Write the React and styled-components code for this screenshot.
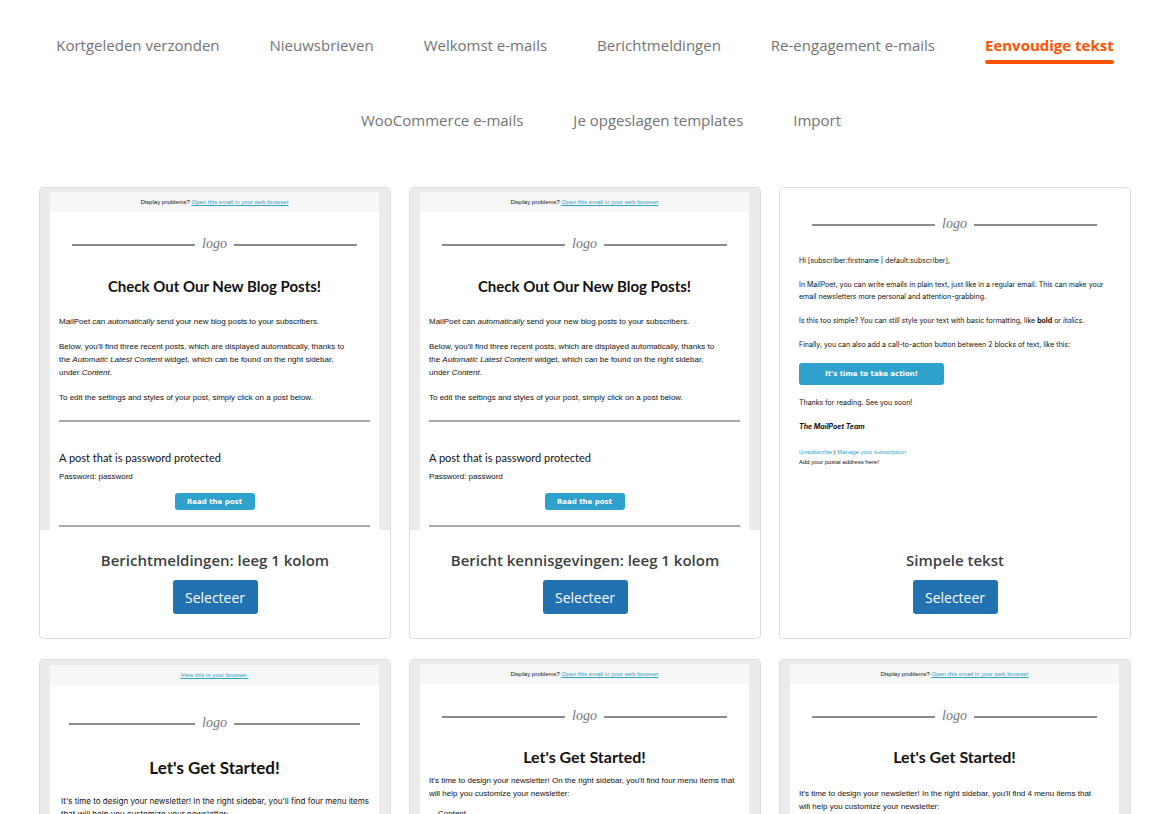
import React from 'react';
import styled, { createGlobalStyle } from 'styled-components';

const categoryRows = [
  [
    'Kortgeleden verzonden',
    'Nieuwsbrieven',
    'Welkomst e-mails',
    'Berichtmeldingen',
    'Re-engagement e-mails',
    'Eenvoudige tekst',
  ],
  ['WooCommerce e-mails', 'Je opgeslagen templates', 'Import'],
];

const Logo = ({ top, wide }) => (
  <LogoRow $top={top} $wide={wide}>
    <LogoLine />
    <LogoText>logo</LogoText>
    <LogoLine />
  </LogoRow>
);

const BrowserBar = () => (
  <TopBar>
    Display problems? <TopLink href="#browser">Open this email in your web browser</TopLink>
  </TopBar>
);

const BlogPosts = () => (
  <Preview>
    <Paper>
      <BrowserBar />
      <Logo top={22} />
      <Heading $top={22} $size={15}>Check Out Our New Blog Posts!</Heading>
      <Text $top={19}>
        MailPoet can <em>automatically</em> send your new blog posts to your subscribers.
      </Text>
      <Text $top={12}>
        Below, you'll find three recent posts, which are displayed automatically, thanks to<br />
        the <em>Automatic Latest Content</em> widget, which can be found on the right sidebar,<br />
        under <em>Content</em>.
      </Text>
      <Text $top={12}>To edit the settings and styles of your post, simply click on a post below.</Text>
      <Divider $top={16} />
      <PostTitle>A post that is password protected</PostTitle>
      <Text $top={4}>Password: password</Text>
      <ReadButton type="button">Read the post</ReadButton>
      <Divider $top={15} />
    </Paper>
  </Preview>
);

const SimpleText = () => (
  <Preview $plain>
    <Paper>
      <Logo top={22} />
      <Letter>
        <p>Hi [subscriber:firstname | default:subscriber],</p>
        <p>
          In MailPoet, you can write emails in plain text, just like in a regular email. This can make your<br />
          email newsletters more personal and attention-grabbing.
        </p>
        <p>
          Is this too simple? You can still style your text with basic formatting, like <b>bold</b> or <em>italics</em>.
        </p>
        <p>Finally, you can also add a call-to-action button between 2 blocks of text, like this:</p>
        <ActionButton type="button">It's time to take action!</ActionButton>
        <p>Thanks for reading. See you soon!</p>
        <p><b><em>The MailPoet Team</em></b></p>
      </Letter>
      <Footer>
        <a href="#unsubscribe">Unsubscribe</a> | <a href="#manage">Manage your subscription</a><br />
        Add your postal address here!
      </Footer>
    </Paper>
  </Preview>
);

const GetStartedLarge = () => (
  <Preview>
    <Paper $top={5}>
      <TopBar><TopLink href="#browser">View this in your browser.</TopLink></TopBar>
      <Logo top={28} wide />
      <Heading $top={25} $size={17}>Let's Get Started!</Heading>
      <Text $top={17} $large>
        It's time to design your newsletter! In the right sidebar, you'll find four menu items<br />
        that will help you customize your newsletter:
      </Text>
    </Paper>
  </Preview>
);

const GetStartedList = () => (
  <Preview>
    <Paper>
      <BrowserBar />
      <Logo top={22} />
      <Heading $top={21}>Let's Get Started!</Heading>
      <Text $top={7}>
        It's time to design your newsletter! On the right sidebar, you'll find four menu items that<br />
        will help you customize your newsletter:
      </Text>
      <List>
        <li>Content</li>
      </List>
    </Paper>
  </Preview>
);

const GetStarted = () => (
  <Preview>
    <Paper>
      <BrowserBar />
      <Logo top={22} />
      <Heading $top={21}>Let's Get Started!</Heading>
      <Text $top={20}>
        It's time to design your newsletter! In the right sidebar, you'll find 4 menu items that<br />
        will help you customize your newsletter:
      </Text>
    </Paper>
  </Preview>
);

const templates = [
  { id: 1, name: 'Berichtmeldingen: leeg 1 kolom', Thumbnail: BlogPosts },
  { id: 2, name: 'Bericht kennisgevingen: leeg 1 kolom', Thumbnail: BlogPosts },
  { id: 3, name: 'Simpele tekst', Thumbnail: SimpleText },
  { id: 4, Thumbnail: GetStartedLarge },
  { id: 5, Thumbnail: GetStartedList },
  { id: 6, Thumbnail: GetStarted },
];

export default function App() {
  const [active, setActive] = React.useState('Eenvoudige tekst');

  return (
    <Page>
      <GlobalStyle />
      <Categories>
        {categoryRows.map((row, i) => (
          <CategoryRow key={row[0]} $indent={i > 0}>
            {row.map((name) => (
              <Category key={name} href="#" $active={name === active} onClick={() => setActive(name)}>
                {name}
              </Category>
            ))}
          </CategoryRow>
        ))}
      </Categories>
      <Templates>
        {templates.map(({ id, name, Thumbnail }) => (
          <Card key={id}>
            <Thumbnail />
            {name && (
              <Info>
                <CardTitle>{name}</CardTitle>
                <SelectButton type="button">Selecteer</SelectButton>
              </Info>
            )}
          </Card>
        ))}
      </Templates>
    </Page>
  );
}

const GlobalStyle = createGlobalStyle`
* {
  box-sizing: border-box;
}

body {
  margin: 0;
  background-color: #fff;
  font-family: "Open Sans", "Noto Sans", sans-serif;
}

p, h1, h2, h3, ul {
  margin: 0;
  padding: 0;
}
`;

const Page = styled.main`
padding: 32px 34px 20px 39px;
`;

const Categories = styled.nav`
display: flex;
flex-direction: column;
gap: 42px;
`;

const CategoryRow = styled.div`
display: flex;
flex-wrap: wrap;
justify-content: center;
gap: 42px 50px;
padding-left: ${(props) => (props.$indent ? 32 : 0)}px;
`;

const Category = styled.a`
height: 33px;
padding-top: 1px;
color: ${(props) => (props.$active ? '#ff5301' : '#747474')};
font-size: 15px;
font-weight: ${(props) => (props.$active ? 700 : 400)};
line-height: 24px;
text-decoration: none;
white-space: nowrap;

&::after {
  content: '';
  display: block;
  height: 4px;
  margin-top: 3px;
  border-radius: 2px;
  background-color: ${(props) => (props.$active ? '#ff5301' : 'transparent')};
}
`;

const Templates = styled.section`
display: grid;
grid-template-columns: repeat(3, 1fr);
gap: 20px 18px;
margin-top: 47px;
`;

const Card = styled.article`
min-height: 452px;
border: 1px solid #dedede;
border-radius: 4px;
background-color: #fff;
overflow: hidden;
`;

const Preview = styled.div`
height: 342px;
padding: 0 11px 0 10px;
background-color: ${(props) => (props.$plain ? '#fff' : '#ebebeb')};
overflow: hidden;
color: #111;
font-family: "Liberation Sans", Arial, sans-serif;
`;

const Paper = styled.div`
display: flow-root;
height: 339px;
margin-top: ${(props) => props.$top || 4}px;
padding: 0 9px;
background-color: #fff;
`;

const TopBar = styled.div`
height: 20px;
margin: 0 -9px;
background-color: #f7f7f7;
font-size: 6px;
line-height: 20px;
text-align: center;
`;

const TopLink = styled.a`
color: #2ea1cd;
`;

const LogoRow = styled.div`
display: flex;
align-items: center;
gap: 7px;
height: 20px;
margin-top: ${(props) => props.$top}px;
padding: 0 ${(props) => (props.$wide ? 10 : 13)}px;
`;

const LogoLine = styled.span`
flex: 1;
height: 2px;
margin-top: 2px;
background-color: #8c8c8c;
`;

const LogoText = styled.span`
color: #777;
font-family: "Liberation Serif", serif;
font-size: 14px;
font-style: italic;
line-height: 20px;
`;

const Heading = styled.h2`
margin-top: ${(props) => props.$top}px;
font-family: Lato, sans-serif;
font-size: ${(props) => props.$size || 16}px;
font-weight: 700;
line-height: 20px;
text-align: center;
`;

const Text = styled.p`
margin-top: ${(props) => props.$top}px;
padding-left: ${(props) => (props.$large ? 2 : 0)}px;
font-family: ${(props) => (props.$large ? 'Inter, sans-serif' : 'inherit')};
font-size: 8px;
line-height: 13px;
white-space: nowrap;
`;

const List = styled.ul`
margin-top: 7px;
padding-left: 9px;
font-size: 8px;
line-height: 13px;
list-style: none;
`;

const Divider = styled.hr`
height: 2px;
margin: ${(props) => props.$top}px 0 0;
border: 0;
background-color: #a9a9a9;
`;

const PostTitle = styled.h3`
margin-top: 28px;
font-family: Lato, sans-serif;
font-size: 11px;
font-weight: 400;
line-height: 16px;
`;

const EmailButton = styled.button`
display: block;
border: 0;
border-radius: 3px;
padding: 0;
background-color: #2ea1cd;
color: #fff;
font-family: "DejaVu Sans", Verdana, sans-serif;
font-size: 7px;
font-weight: 700;
`;

const ReadButton = styled(EmailButton)`
width: 80px;
height: 17px;
margin: 10px auto 0;
`;

const ActionButton = styled(EmailButton)`
width: 145px;
height: 22px;
`;

const Letter = styled.div`
display: flex;
flex-direction: column;
gap: 12px;
margin-top: 21px;
font-family: Inter, sans-serif;
font-size: 7px;
line-height: 12px;
white-space: nowrap;
`;

const Footer = styled.p`
margin-top: 14px;
font-size: 6px;
line-height: 10px;

a {
  color: #2ea1cd;
  text-decoration: none;
}
`;

const Info = styled.div`
display: flex;
flex-direction: column;
align-items: center;
gap: 8px;
padding: 18px 10px 24px;
`;

const CardTitle = styled.h2`
color: #3c3f43;
font-size: 15px;
font-weight: 600;
line-height: 24px;
`;

const SelectButton = styled.button`
width: 85px;
height: 34px;
border: 0;
border-radius: 3px;
padding: 0;
background-color: #2271b1;
color: #fff;
font-family: inherit;
font-size: 14px;
`;
